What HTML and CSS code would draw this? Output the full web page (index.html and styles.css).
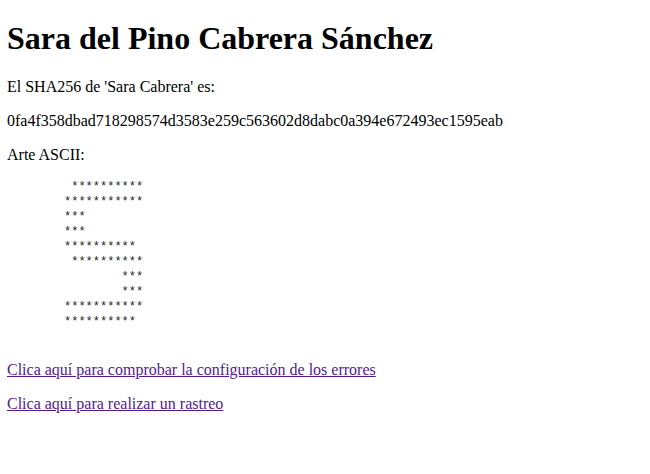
FILE: index.html
```html
<!DOCTYPE html>
<html lang="es">
<head>
<meta charset="utf-8">
<title>Sara del Pino Cabrera Sánchez</title>
<link rel="stylesheet" href="styles.css">
</head>
<body>
<h1 class="title">Sara del Pino Cabrera Sánchez</h1>
<p class="text">El SHA256 de 'Sara Cabrera' es:</p>
<p class="text">0fa4f358dbad718298574d3583e259c563602d8dabc0a394e672493ec1595eab</p>
<p class="text">Arte ASCII:</p>
<pre class="ascii"> **********
***********
***
***
**********
 **********
        ***
        ***
***********
**********

</pre>
<p class="text"><a class="link" href="#errores">Clica aquí para comprobar la configuración de los errores</a></p>
<p class="text"><a class="link" href="#rastreo">Clica aquí para realizar un rastreo</a></p>
</body>
</html>
```
FILE: styles.css
```css
body {
  margin: 8px 8px 8px 7px;
  font-family: "Liberation Serif", "Times New Roman", serif;
  font-size: 16px;
  color: #000;
  background: #fff;
}
.title {
  font-size: 32px;
  font-weight: bold;
  margin: 12px 0 21px;
}
.text {
  margin: 16px 0;
}
.ascii {
  font-family: "Liberation Mono", "Courier New", monospace;
  font-size: 12px;
  line-height: 15px;
  margin: 16px 0 16px 57px;
  color: #222;
}
.link {
  color: #551a8b;
  text-decoration: underline;
}
```
